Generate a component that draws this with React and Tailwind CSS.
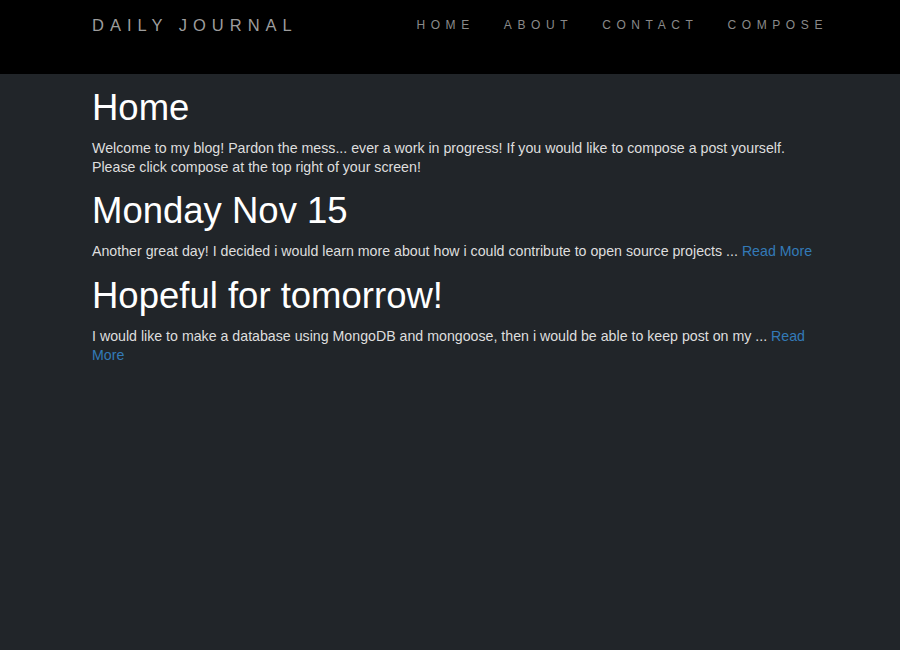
import React from 'react';

const posts = [
  {
    title: 'Monday Nov 15',
    body: 'Another great day! I decided i would learn more about how i could contribute to open source projects ...',
  },
  {
    title: 'Hopeful for tomorrow!',
    body: 'I would like to make a database using MongoDB and mongoose, then i would be able to keep post on my ...',
  },
];

const links = ['HOME', 'ABOUT', 'CONTACT', 'COMPOSE'];

export default function App() {
  return (
    <div className="min-h-[650px] bg-[#212529] font-['Liberation_Sans',Arial,sans-serif]">
      <header className="h-[74px] bg-black">
        <div className="ml-[92px] w-[736px] flex justify-between items-start pt-[15px]">
          <a className="text-[16.5px] leading-[20px] tracking-[6px] text-[#9d9d9d]">DAILY JOURNAL</a>
          <nav className="flex gap-[29px] pt-[2px]">
            {links.map((l) => (
              <a key={l} className="text-[12px] leading-[16px] tracking-[5.6px] text-[#8a8a8a]">
                {l}
              </a>
            ))}
          </nav>
        </div>
      </header>

      <main className="ml-[92px] w-[730px] pt-[13.5px] text-[14.2px] leading-[19px] text-[#dedede]">
        <h1 className="text-[36.5px] leading-[40px] text-white mb-[11px]">Home</h1>
        <p>
          Welcome to my blog! Pardon the mess... ever a work in progress! If you would like to compose a post yourself.
          Please click compose at the top right of your screen!
        </p>

        {posts.map((post) => (
          <div key={post.title} className="mt-[14.5px]">
            <h1 className="text-[36.5px] leading-[40px] text-white mb-[11px]">{post.title}</h1>
            <p>
              {post.body} <a className="text-[#337ab7]">Read More</a>
            </p>
          </div>
        ))}
      </main>
    </div>
  );
}
